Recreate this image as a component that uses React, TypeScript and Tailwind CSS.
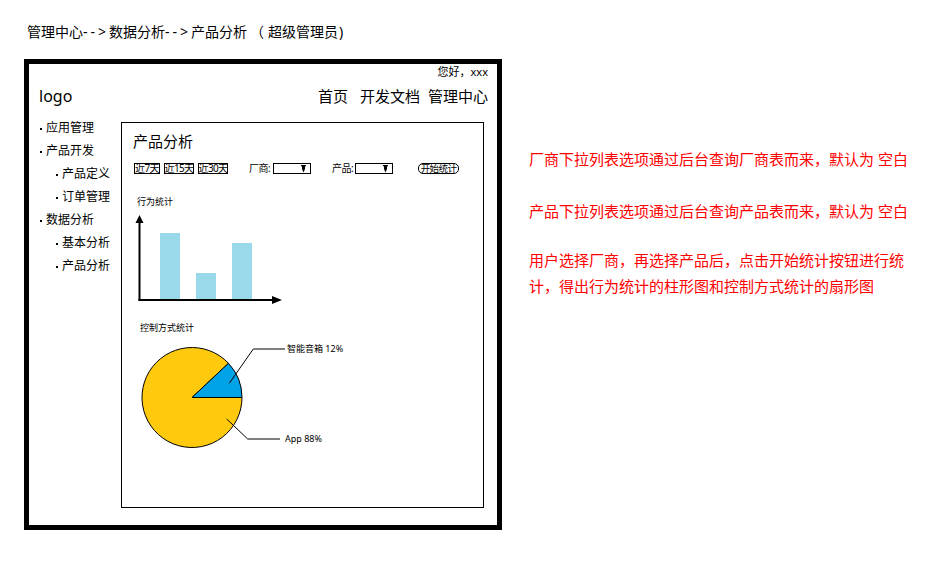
export default function App() {
  const side = [
    { t: "应用管理", sub: false },
    { t: "产品开发", sub: false },
    { t: "产品定义", sub: true },
    { t: "订单管理", sub: true },
    { t: "数据分析", sub: false },
    { t: "基本分析", sub: true },
    { t: "产品分析", sub: true },
  ];
  const Arrow = () => (
    <svg width="5" height="8" viewBox="0 0 5 8" className="mr-[4px]">
      <path d="M0,0 H5 V1.2 H4 V4 L2.5,7.5 L1,4 V1.2 H0 Z" fill="#000" />
    </svg>
  );
  return (
    <div className="w-[941px] h-[586px] bg-white text-black [font-family:'Noto_Sans','Noto_Sans_CJK_SC',sans-serif] overflow-hidden">
      <div className="h-[59px] pt-[22px] pl-[27px] text-[14px] leading-[20px] whitespace-nowrap">
        管理中心<span className="tracking-[3px]">--&gt;</span>数据分析<span className="tracking-[3px]">--&gt;</span>产品分析<span className="ml-[3px] mr-[4px]">（</span>超级管理员<span className="ml-[1px]">)</span>
      </div>
      <div className="flex items-start">
        <div className="ml-[24px] w-[478px] h-[471px] border-[5px] border-black flex flex-col">
          <div className="mt-[1px] h-[14px] pr-[9px] text-right text-[11px] leading-[14px]">您好，xxx</div>
          <div className="mt-[6px] h-[22px] flex items-center justify-between pl-[10px] pr-[9px]">
            <span className="text-[16px] leading-[22px]">logo</span>
            <div className="flex text-[15px] leading-[22px]">
              <span className="mr-[12px]">首页</span>
              <span className="mr-[8px]">开发文档</span>
              <span>管理中心</span>
            </div>
          </div>
          <div className="mt-[9px] flex">
            <div className="w-[92px] flex flex-col">
              {side.map((s) => (
                <div
                  key={s.t + (s.sub ? "s" : "")}
                  className={`flex items-center h-[23px] text-[12px] leading-[23px] ${s.sub ? "pl-[27px]" : "pl-[11px]"}`}
                >
                  <span className="w-[2px] h-[2px] bg-black mt-[3px]" />
                  <span className="ml-[4px]">{s.t}</span>
                </div>
              ))}
            </div>
            <div className="mt-[6px] w-[363px] h-[386px] border border-black flex flex-col pl-[11px] pt-[8px]">
              <div className="text-[15px] leading-[20px]">产品分析</div>
              <div className="mt-[12px] h-[11px] flex items-center text-[10px] leading-[9px] whitespace-nowrap">
                <span className="ml-[1px] w-[26px] h-[11px] border border-black flex items-center justify-center tracking-[-0.5px]">近7天</span>
                <span className="ml-[4px] w-[30px] h-[11px] border border-black flex items-center justify-center tracking-[-0.6px]">近15天</span>
                <span className="ml-[4px] w-[30px] h-[11px] border border-black flex items-center justify-center tracking-[-0.6px]">近30天</span>
                <span className="ml-[21px] w-[24px] flex items-center tracking-[-0.5px]">厂商:</span>
                <span className="w-[38px] h-[11px] border border-black flex items-center justify-end"><Arrow /></span>
                <span className="ml-[21px] w-[23px] flex items-center tracking-[-0.5px]">产品:</span>
                <span className="w-[38px] h-[11px] border border-black flex items-center justify-end"><Arrow /></span>
                <span className="ml-[25px] w-[41px] h-[11px] border border-black rounded-[5px] flex items-center justify-center text-[9.5px] tracking-[-0.6px]">开始统计</span>
              </div>
              <div className="mt-[22px] ml-[4px] text-[9px] leading-[12px]">行为统计</div>
              <svg width="160" height="100" viewBox="0 0 160 100" className="block">
                <rect x="27" y="25" width="20" height="67" fill="#99D9EA" />
                <rect x="63" y="65" width="20" height="27" fill="#99D9EA" />
                <rect x="99" y="35" width="20" height="57" fill="#99D9EA" />
                <line x1="6.5" y1="12" x2="6.5" y2="93" stroke="#000" strokeWidth="2" />
                <line x1="5.5" y1="92" x2="142" y2="92" stroke="#000" strokeWidth="2" />
                <polygon points="6.5,7 2.5,15 10.5,15" fill="#000" />
                <polygon points="149,92 139,88 139,96" fill="#000" />
              </svg>
              <div className="mt-[14px] ml-[7px] text-[9px] leading-[12px]">控制方式统计</div>
              <svg width="240" height="120" viewBox="0 0 240 120" className="block">
                <path d="M59,63.5 L95.46,29.29 A50,50 0 1,0 109,63.5 Z" fill="#FFC90E" stroke="#000" strokeWidth="1" />
                <path d="M59,63.5 L109,63.5 A50,50 0 0,0 95.46,29.29 Z" fill="#00A2E8" stroke="#000" strokeWidth="1" />
                <polyline points="96.3,49.3 120.3,15 152,15" fill="none" stroke="#000" strokeWidth="1" />
                <polyline points="93.7,85 114.7,105 147,105" fill="none" stroke="#000" strokeWidth="1" />
                <text x="154" y="16" fontSize="9" dominantBaseline="middle" fill="#000">智能音箱 12%</text>
                <text x="152" y="105.5" fontSize="9" dominantBaseline="middle" fill="#000">App 88%</text>
              </svg>
            </div>
          </div>
        </div>
        <div className="ml-[27px] mt-[87px] w-[384px] text-[15px] leading-[26px] text-[#ff0000]">
          <p>厂商下拉列表选项通过后台查询厂商表而来，默认为 空白</p>
          <p className="mt-[26px]">产品下拉列表选项通过后台查询产品表而来，默认为 空白</p>
          <p className="mt-[23px]">用户选择厂商，再选择产品后，点击开始统计按钮进行统计，得出行为统计的柱形图和控制方式统计的扇形图</p>
        </div>
      </div>
    </div>
  );
}
